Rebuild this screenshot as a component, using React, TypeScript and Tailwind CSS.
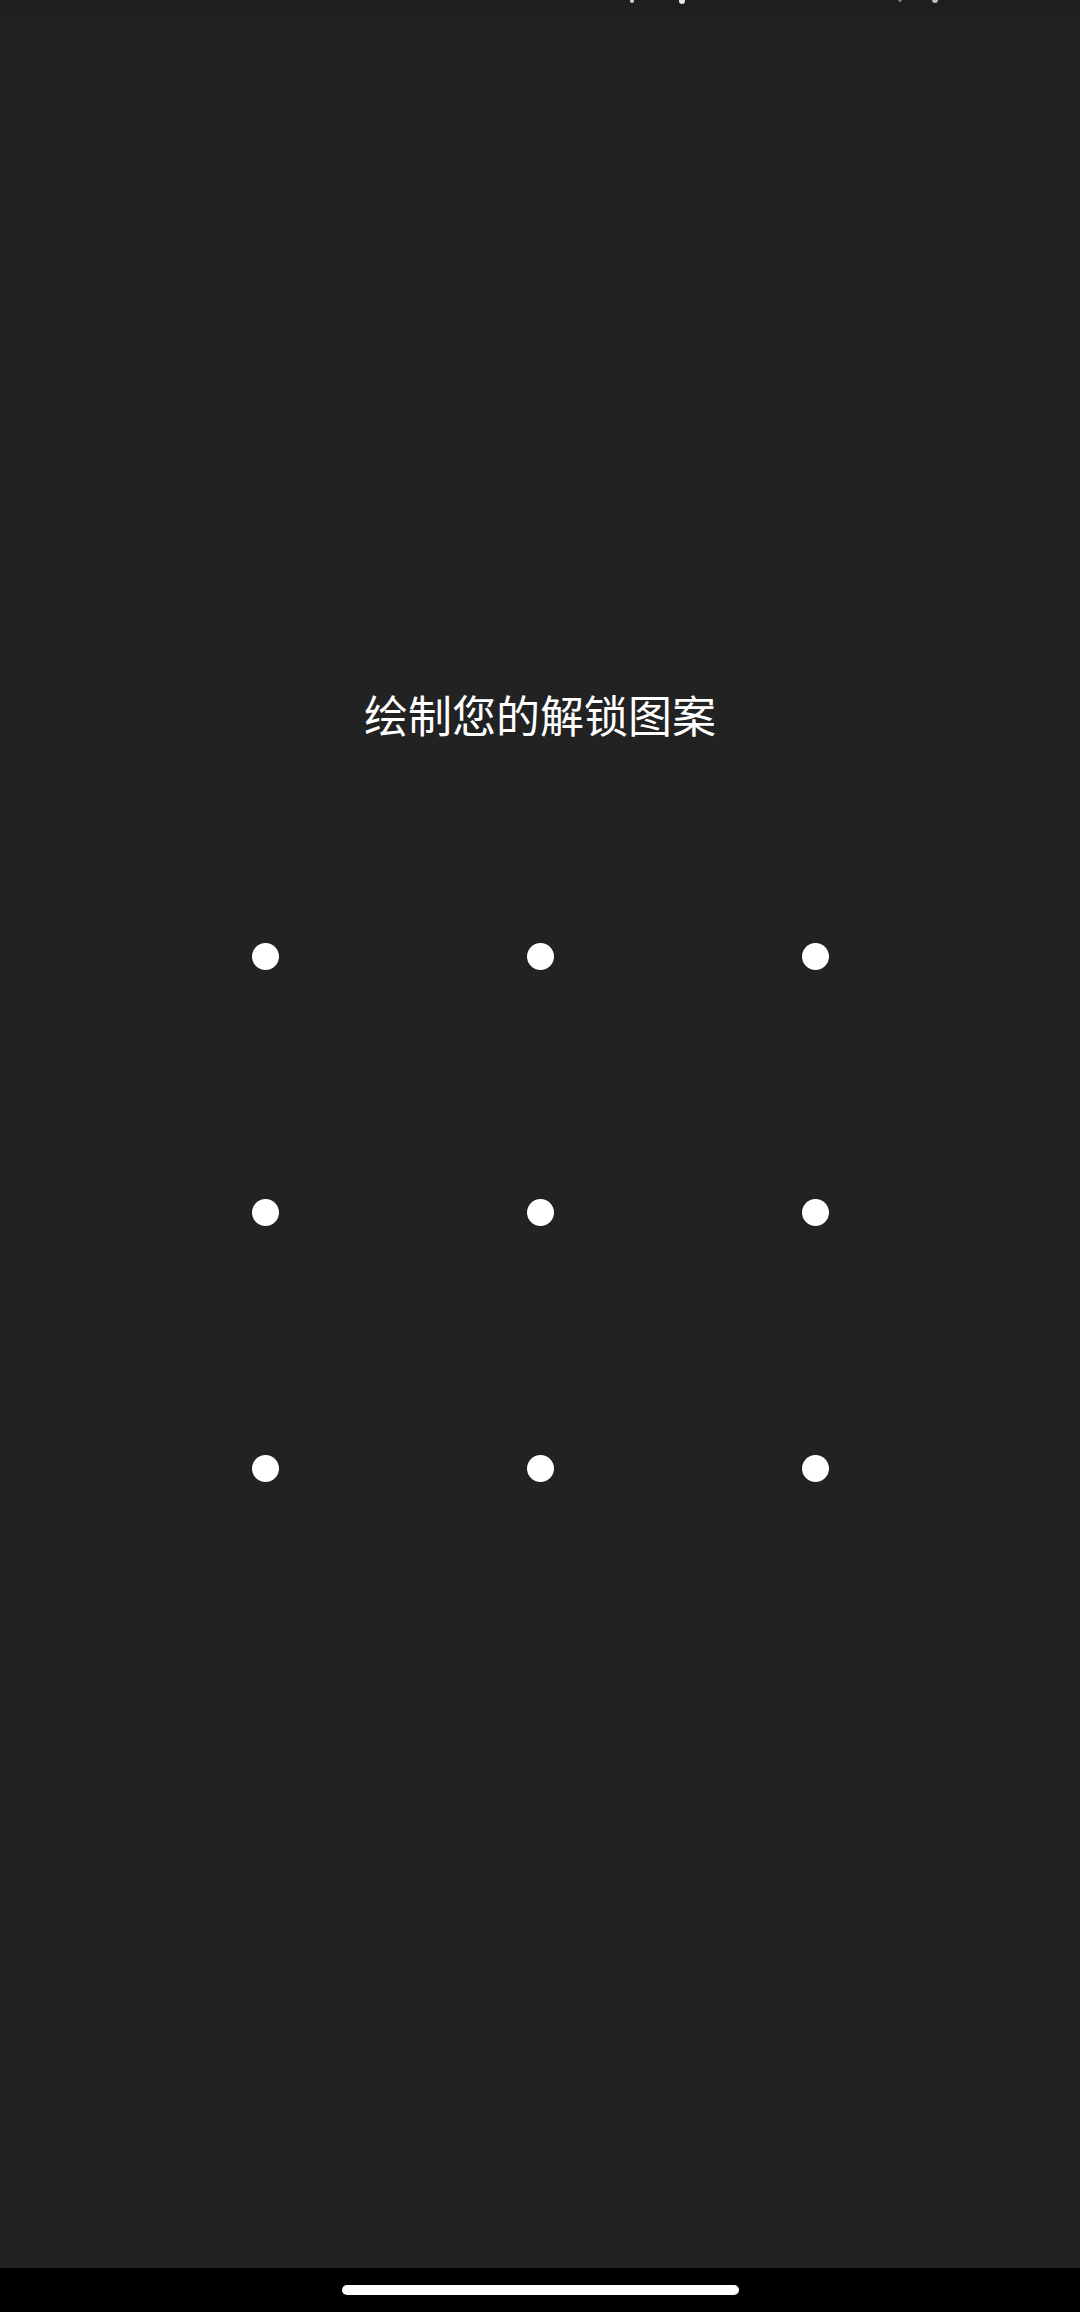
const dots = Array.from({ length: 9 }, (_, i) => i);

export default function App() {
  return (
    <div className="flex h-[2312px] w-[1080px] flex-col bg-[#222222]" style={{ fontFamily: '"Noto Sans CJK SC", "Noto Sans", sans-serif' }}>
      {/* status bar, mostly cut off */}
      <div className="flex h-[15px] items-start bg-[#1e1e1e] pl-[630px]">
        <div className="h-[3px] w-[4px] rounded-b-full bg-white/80" />
        <div className="ml-[45px] h-[4px] w-[6px] rounded-b-full bg-white/90" />
        <div className="ml-[213px] h-[2px] w-[4px] rounded-b-full bg-white/40" />
        <div className="ml-[30px] h-[3px] w-[6px] rounded-b-full bg-white/70" />
      </div>

      <main className="flex flex-1 flex-col items-center pt-[677px]">
        <h1 className="text-[44px] leading-[44px] font-normal text-white">绘制您的解锁图案</h1>
        <div className="mt-[92px] grid grid-cols-3">
          {dots.map((d) => (
            <div key={d} className="flex h-[256px] w-[275px] items-center justify-center">
              <div className="h-[27px] w-[27px] rounded-full bg-white" />
            </div>
          ))}
        </div>
      </main>

      <div className="flex h-[44px] justify-center bg-black pt-[17px]">
        <div className="h-[10px] w-[397px] rounded-full bg-white" />
      </div>
    </div>
  );
}
